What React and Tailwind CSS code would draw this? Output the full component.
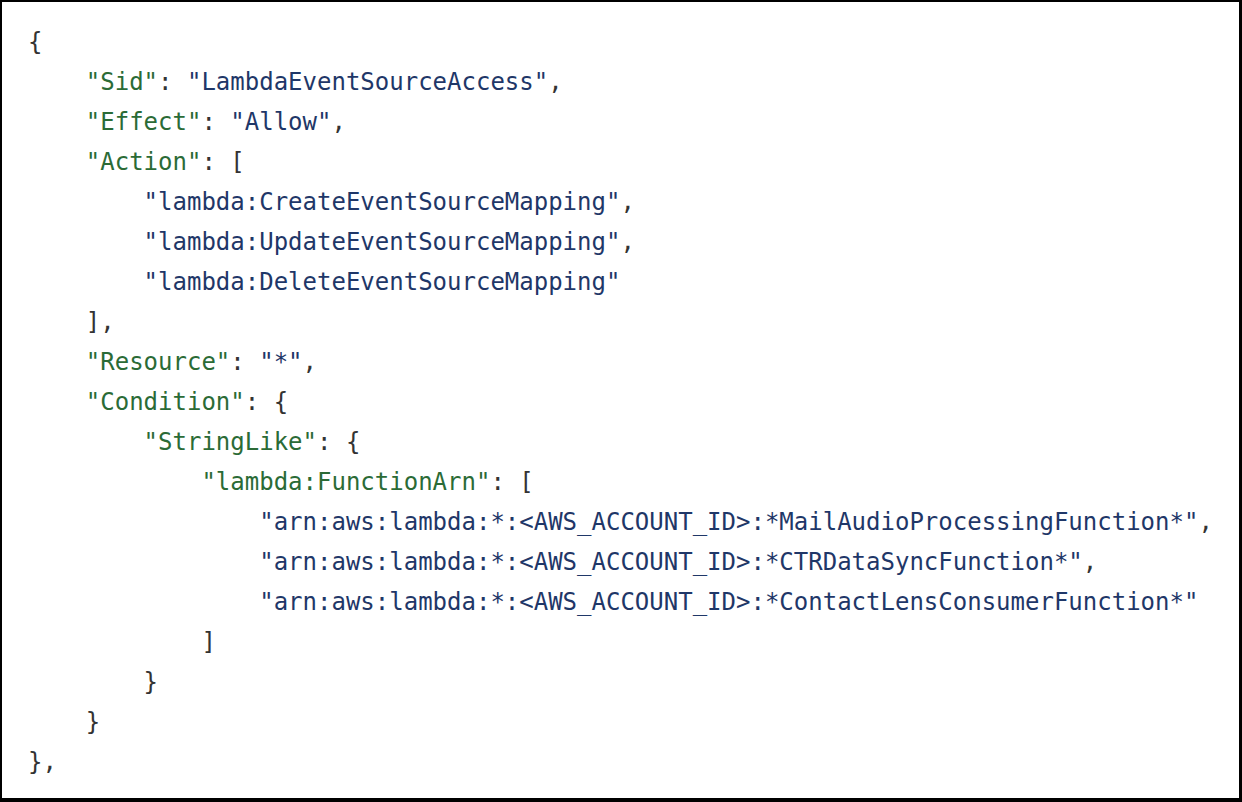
import React from "react";

const K = ({ children }) => <span className="text-[#2b6b36]">{children}</span>;
const V = ({ children }) => <span className="text-[#1f3768]">{children}</span>;

const lines = [
    [0, <>{"{"}</>],
    [1, <><K>"Sid"</K>: <V>"LambdaEventSourceAccess"</V>,</>],
    [1, <><K>"Effect"</K>: <V>"Allow"</V>,</>],
    [1, <><K>"Action"</K>: [</>],
    [2, <><V>"lambda:CreateEventSourceMapping"</V>,</>],
    [2, <><V>"lambda:UpdateEventSourceMapping"</V>,</>],
    [2, <><V>"lambda:DeleteEventSourceMapping"</V></>],
    [1, <>],</>],
    [1, <><K>"Resource"</K>: <V>"*"</V>,</>],
    [1, <><K>"Condition"</K>: {"{"}</>],
    [2, <><K>"StringLike"</K>: {"{"}</>],
    [3, <><K>"lambda:FunctionArn"</K>: [</>],
    [4, <><V>"arn:aws:lambda:*:&lt;AWS_ACCOUNT_ID&gt;:*MailAudioProcessingFunction*"</V>,</>],
    [4, <><V>"arn:aws:lambda:*:&lt;AWS_ACCOUNT_ID&gt;:*CTRDataSyncFunction*"</V>,</>],
    [4, <><V>"arn:aws:lambda:*:&lt;AWS_ACCOUNT_ID&gt;:*ContactLensConsumerFunction*"</V></>],
    [3, <>]</>],
    [2, <>{"}"}</>],
    [1, <>{"}"}</>],
    [0, <>{"},"}</>],
];

const App = () => {
    return (
        <div className="w-[1242px] h-[802px] bg-white border-t-2 border-l-2 border-r-[3px] border-b-4 border-black overflow-hidden">
            <pre className="pl-[26px] pt-[20px] font-['DejaVu_Sans_Mono',monospace] text-[24px] leading-[40px] text-[#333333]">
                {lines.map(([indent, content], i) => (
                    <div key={i} style={{ paddingLeft: `${indent * 4}ch` }}>
                        {content}
                    </div>
                ))}
            </pre>
        </div>
    );
};

export default App;
